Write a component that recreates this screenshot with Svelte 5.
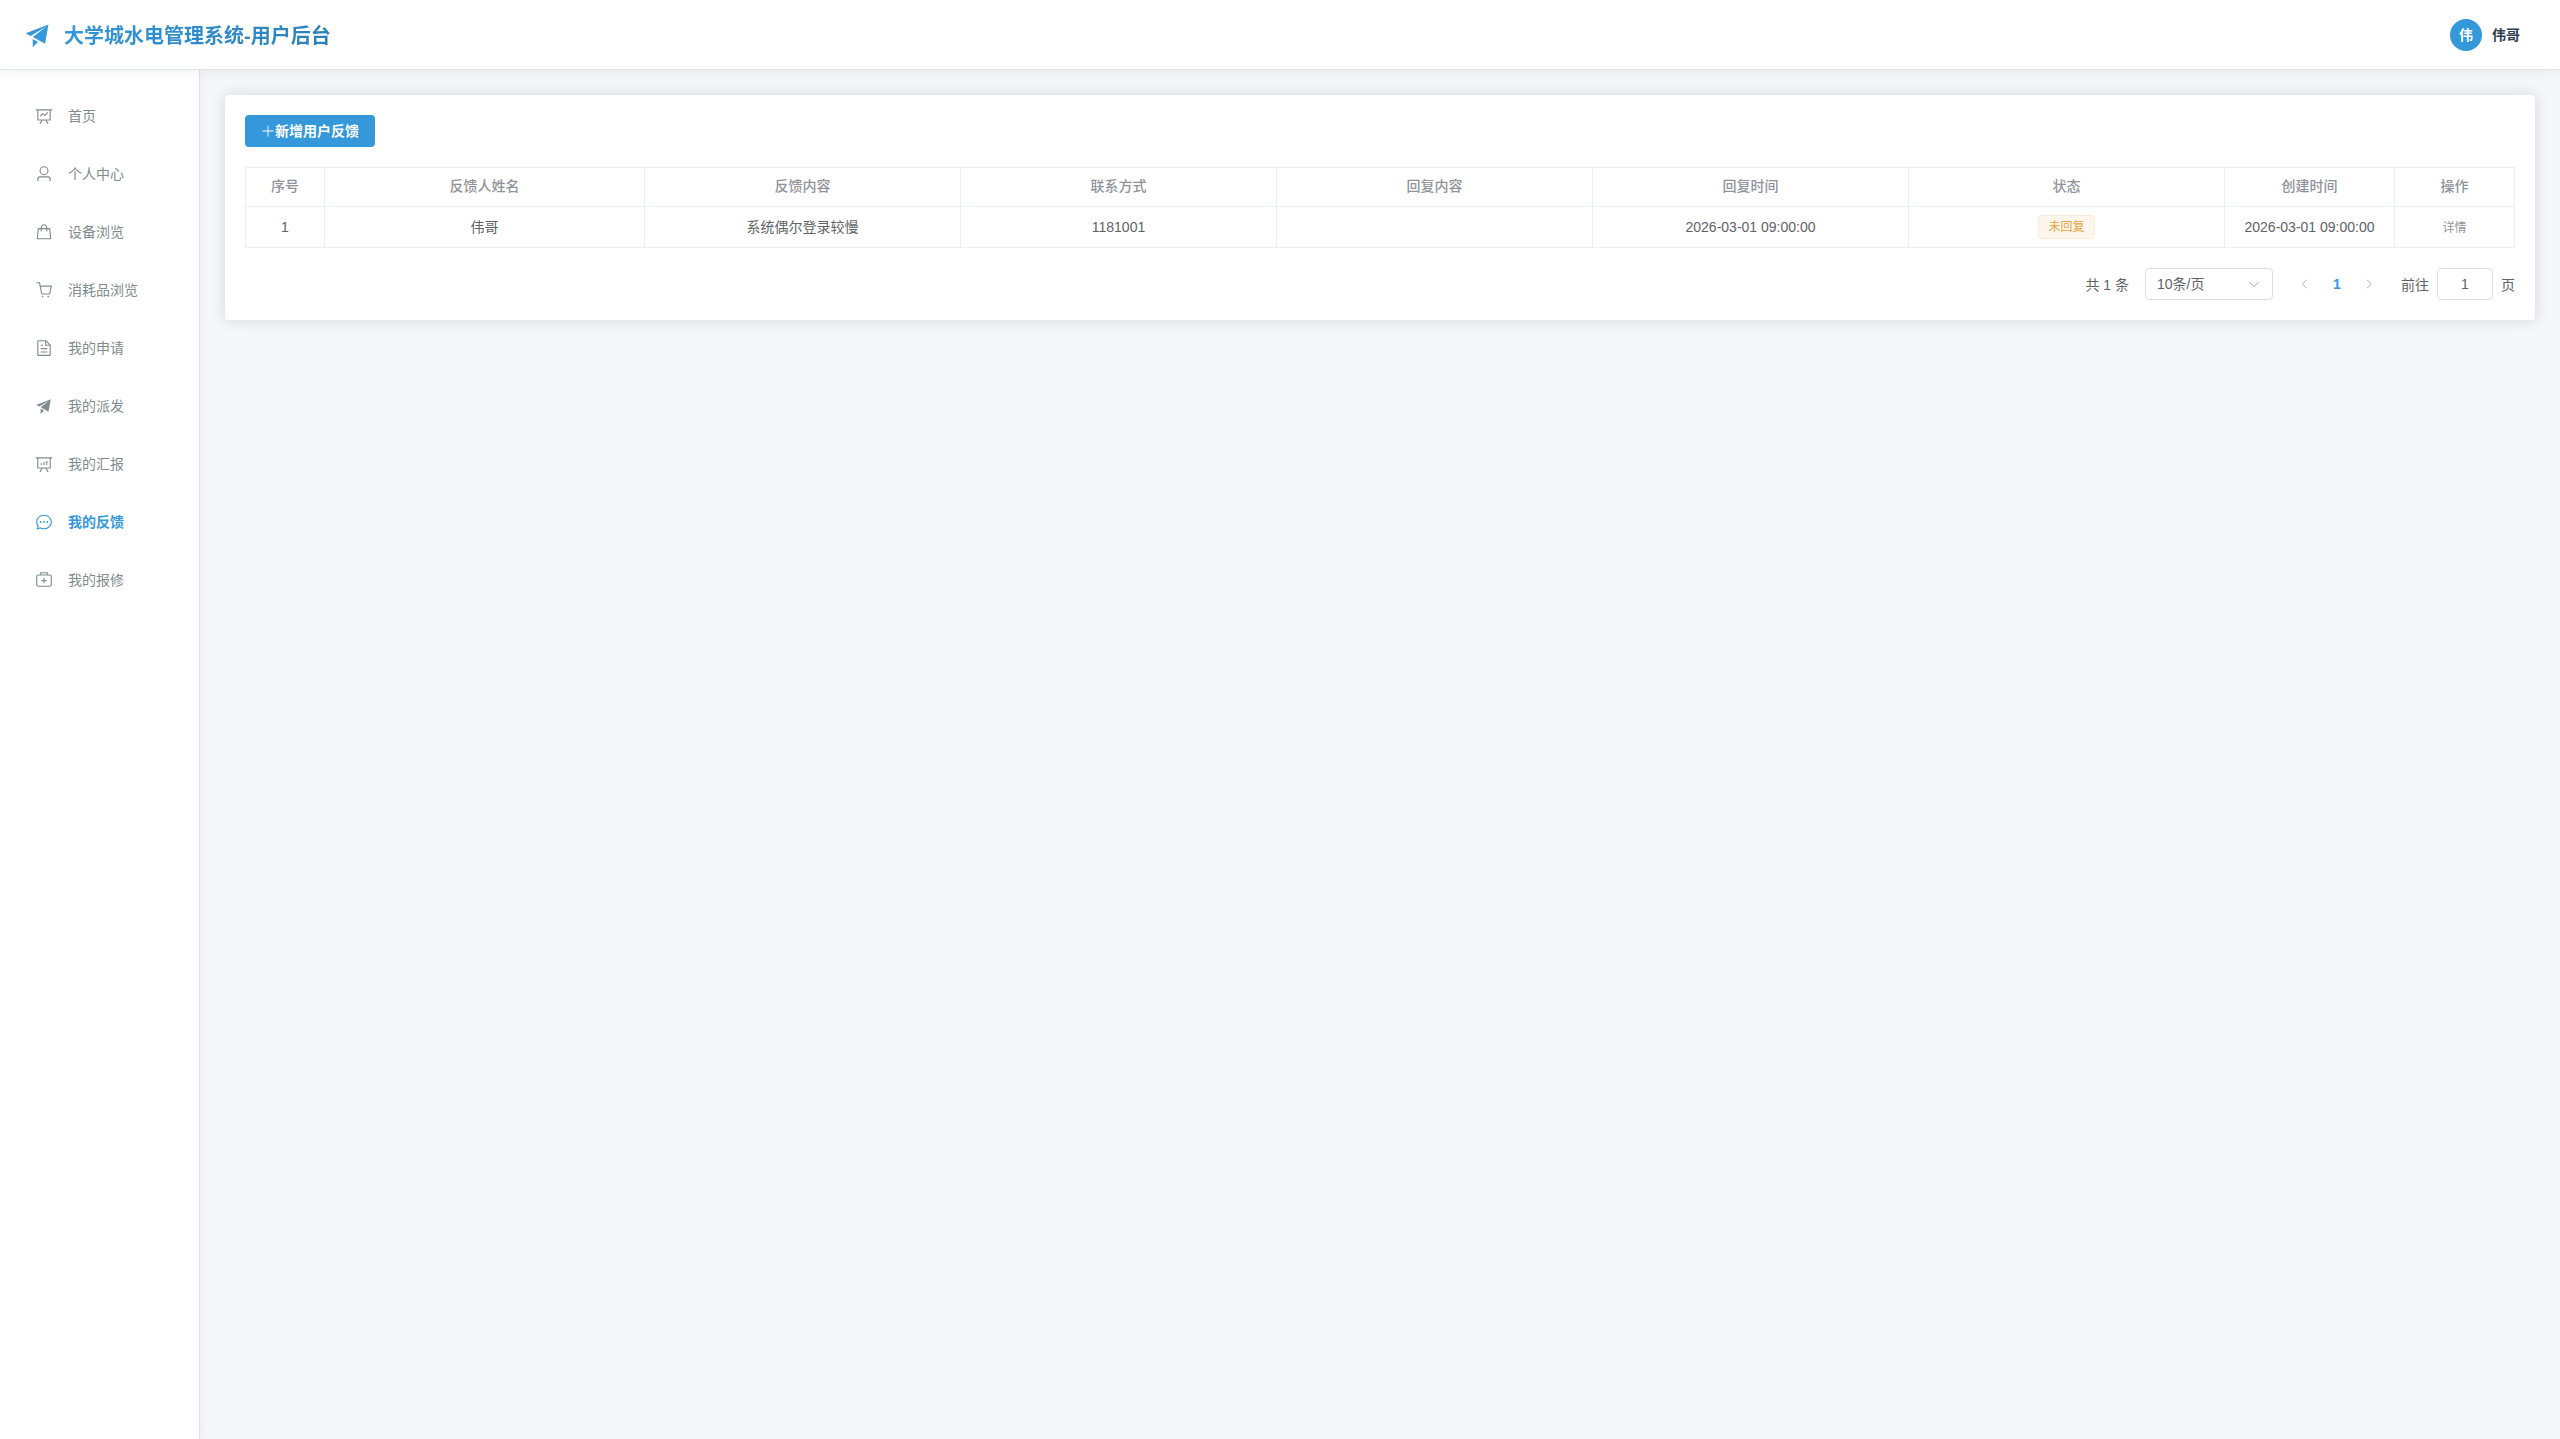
<script lang="ts">
	type MenuItem = { label: string; icon: string; href: string };

	const icons: Record<string, string> = {
		promotion:
			'm64 448 832-320-128 704-446.08-243.328L832 192 242.816 545.472zm256 512V657.024L512 768z',
		dataLine:
			'M359.168 768H160a32 32 0 0 1-32-32V192H64a32 32 0 0 1 0-64h896a32 32 0 1 1 0 64h-64v544a32 32 0 0 1-32 32H665.216l110.848 192h-73.856L591.36 768H433.024L322.176 960H248.32zM832 192H192v512h640zM342.656 534.656a32 32 0 1 1-45.312-45.312L444.992 341.76l125.44 94.08L679.04 300.032a32 32 0 1 1 49.92 39.936L581.632 524.224 451.008 426.24 342.656 534.592z',
		user: 'M512 512a192 192 0 1 0 0-384 192 192 0 0 0 0 384m0 64a256 256 0 1 1 0-512 256 256 0 0 1 0 512m320 320v-96a96 96 0 0 0-96-96H288a96 96 0 0 0-96 96v96a32 32 0 1 1-64 0v-96a160 160 0 0 1 160-160h448a160 160 0 0 1 160 160v96a32 32 0 1 1-64 0',
		goods:
			'M320 288v-22.336C320 154.688 405.504 64 512 64s192 90.688 192 201.664v22.4h131.072a32 32 0 0 1 31.808 28.8l57.6 576a32 32 0 0 1-31.808 35.2H131.328a32 32 0 0 1-31.808-35.2l57.6-576a32 32 0 0 1 31.808-28.8H320zm64 0h256v-22.336C640 189.248 582.272 128 512 128s-128 61.248-128 137.664zm-64 64H217.92l-51.2 512h690.56l-51.264-512H704v96a32 32 0 1 1-64 0v-96H384v96a32 32 0 0 1-64 0z',
		cart: 'M432 928a48 48 0 1 1 0-96 48 48 0 0 1 0 96m320 0a48 48 0 1 1 0-96 48 48 0 0 1 0 96M96 128a32 32 0 0 1 0-64h160a32 32 0 0 1 31.36 25.728L320.64 256H928a32 32 0 0 1 31.296 38.72l-96 448A32 32 0 0 1 832 768H384a32 32 0 0 1-31.36-25.728L229.76 128zm314.24 576h395.904l82.304-384H333.44z',
		document:
			'M832 384H576V128H192v768h640zm-26.496-64L640 154.496V320zM160 64h480l256 256v608a32 32 0 0 1-32 32H160a32 32 0 0 1-32-32V96a32 32 0 0 1 32-32m160 448h384v64H320zm0-192h160v64H320zm0 384h384v64H320z',
		dataAnalysis:
			'm665.216 768 110.848 192h-73.856L591.36 768H433.024L322.176 960H248.32l110.848-192H160a32 32 0 0 1-32-32V192H64a32 32 0 0 1 0-64h896a32 32 0 1 1 0 64h-64v544a32 32 0 0 1-32 32zM832 192H192v512h640zM352 448a32 32 0 0 1 32 32v64a32 32 0 0 1-64 0v-64a32 32 0 0 1 32-32m160-64a32 32 0 0 1 32 32v128a32 32 0 0 1-64 0V416a32 32 0 0 1 32-32m160-64a32 32 0 0 1 32 32v192a32 32 0 1 1-64 0V352a32 32 0 0 1 32-32',
		chat: 'm174.72 855.68 135.296-45.12 23.68 11.84C388.096 849.536 448.576 864 512 864c211.84 0 384-166.784 384-352S723.84 160 512 160 128 326.784 128 512c0 69.12 24.96 139.264 70.848 199.232l22.08 28.8-46.272 115.584zm-45.248 82.56A32 32 0 0 1 89.6 896l58.368-145.92C94.72 680.32 64 596.864 64 512 64 299.904 256 96 512 96s448 203.904 448 416-192 416-448 416a461.06 461.06 0 0 1-206.912-48.384l-175.616 58.56zM512 563.2a51.2 51.2 0 1 1 0-102.4 51.2 51.2 0 0 1 0 102.4m192 0a51.2 51.2 0 1 1 0-102.4 51.2 51.2 0 0 1 0 102.4m-384 0a51.2 51.2 0 1 1 0-102.4 51.2 51.2 0 0 1 0 102.4',
		aidKit:
			'M192 256a64 64 0 0 0-64 64v448a64 64 0 0 0 64 64h640a64 64 0 0 0 64-64V320a64 64 0 0 0-64-64zm0-64h640a128 128 0 0 1 128 128v448a128 128 0 0 1-128 128H192A128 128 0 0 1 64 768V320a128 128 0 0 1 128-128M544 512h96a32 32 0 0 1 0 64h-96v96a32 32 0 0 1-64 0v-96h-96a32 32 0 0 1 0-64h96v-96a32 32 0 0 1 64 0zM352 128v64h320v-64zm-32-64h384a32 32 0 0 1 32 32v128a32 32 0 0 1-32 32H320a32 32 0 0 1-32-32V96a32 32 0 0 1 32-32',
		plus: 'M480 480V128a32 32 0 0 1 64 0v352h352a32 32 0 1 1 0 64H544v352a32 32 0 1 1-64 0V544H128a32 32 0 0 1 0-64z',
		left: 'M609.408 149.376 277.76 489.6a32 32 0 0 0 0 44.672l331.648 340.352a29.12 29.12 0 0 0 41.728 0 30.59 30.59 0 0 0 0-42.752L339.264 511.936l311.872-319.872a30.59 30.59 0 0 0 0-42.688 29.12 29.12 0 0 0-41.728 0',
		right:
			'M340.864 149.312a30.59 30.59 0 0 0 0 42.752L652.736 512 340.864 831.872a30.59 30.59 0 0 0 0 42.752 29.12 29.12 0 0 0 41.728 0L714.24 534.336a32 32 0 0 0 0-44.672L382.592 149.376a29.12 29.12 0 0 0-41.728 0z',
		down: 'M831.872 340.864 512 652.672 192.128 340.864a30.59 30.59 0 0 0-42.752 0 29.12 29.12 0 0 0 0 41.6L489.664 714.24a32 32 0 0 0 44.672 0l340.288-331.712a29.12 29.12 0 0 0 0-41.728 30.59 30.59 0 0 0-42.752 0z'
	};

	const menu: MenuItem[] = [
		{ label: '首页', icon: 'dataLine', href: '#/home' },
		{ label: '个人中心', icon: 'user', href: '#/profile' },
		{ label: '设备浏览', icon: 'goods', href: '#/device' },
		{ label: '消耗品浏览', icon: 'cart', href: '#/consumable' },
		{ label: '我的申请', icon: 'document', href: '#/apply' },
		{ label: '我的派发', icon: 'promotion', href: '#/dispatch' },
		{ label: '我的汇报', icon: 'dataAnalysis', href: '#/report' },
		{ label: '我的反馈', icon: 'chat', href: '#/feedback' },
		{ label: '我的报修', icon: 'aidKit', href: '#/repair' }
	];

	const rows = [
		{
			name: '伟哥',
			content: '系统偶尔登录较慢',
			contact: '1181001',
			reply: '',
			replyTime: '2026-03-01 09:00:00',
			status: '未回复',
			createTime: '2026-03-01 09:00:00'
		}
	];

	let current = $state('#/feedback');
	let pageSize = $state('10');
	let page = $state('1');
</script>

{#snippet icon(name: string)}
	<svg class="icon" viewBox="0 0 1024 1024" aria-hidden="true">
		<path fill="currentColor" d={icons[name]} />
	</svg>
{/snippet}

<div class="layout">
	<header class="header">
		<div class="brand">
			{@render icon('promotion')}
			<h1>大学城水电管理系统-用户后台</h1>
		</div>
		<button class="account" type="button">
			<span class="avatar">伟</span>
			<span>伟哥</span>
		</button>
	</header>

	<div class="body">
		<nav class="sidebar">
			{#each menu as item}
				<a
					class="menu-item"
					class:active={current === item.href}
					href={item.href}
					onclick={() => (current = item.href)}
				>
					{@render icon(item.icon)}
					<span>{item.label}</span>
				</a>
			{/each}
		</nav>

		<main class="main">
			<section class="card">
				<button class="btn-add" type="button">
					{@render icon('plus')}<span>新增用户反馈</span>
				</button>

				<table>
					<colgroup>
						<col class="col-index" />
						<col class="col-name" />
						<col span="5" />
						<col class="col-time" />
						<col class="col-action" />
					</colgroup>
					<thead>
						<tr>
							<th>序号</th>
							<th>反馈人姓名</th>
							<th>反馈内容</th>
							<th>联系方式</th>
							<th>回复内容</th>
							<th>回复时间</th>
							<th>状态</th>
							<th>创建时间</th>
							<th>操作</th>
						</tr>
					</thead>
					<tbody>
						{#each rows as row, i}
							<tr>
								<td>{i + 1}</td>
								<td>{row.name}</td>
								<td>{row.content}</td>
								<td>{row.contact}</td>
								<td>{row.reply}</td>
								<td>{row.replyTime}</td>
								<td><span class="tag">{row.status}</span></td>
								<td>{row.createTime}</td>
								<td><button class="btn-text" type="button">详情</button></td>
							</tr>
						{/each}
					</tbody>
				</table>

				<div class="pagination">
					<span>共 {rows.length} 条</span>
					<div class="select">
						<select bind:value={pageSize} aria-label="每页条数">
							<option value="10">10条/页</option>
							<option value="20">20条/页</option>
							<option value="50">50条/页</option>
						</select>
						{@render icon('down')}
					</div>
					<div class="pager">
						<button type="button" disabled aria-label="上一页">{@render icon('left')}</button>
						<button type="button" class="active">1</button>
						<button type="button" disabled aria-label="下一页">{@render icon('right')}</button>
					</div>
					<label class="jump">
						<span>前往</span>
						<input type="text" bind:value={page} />
						<span>页</span>
					</label>
				</div>
			</section>
		</main>
	</div>
</div>

<style>
	:global(body) {
		margin: 0;
		background: #f5f7fa;
	}

	.layout {
		display: flex;
		flex-direction: column;
		min-height: 100vh;
		font-family: 'Liberation Sans', 'Noto Sans CJK SC', sans-serif;
		font-size: 14px;
		color: #606266;
	}

	button,
	input,
	select {
		font: inherit;
		color: inherit;
		box-sizing: border-box;
	}

	button {
		padding: 0;
		border: none;
		background: none;
		cursor: pointer;
	}

	.icon {
		display: block;
		flex: none;
		width: 14px;
		height: 14px;
	}

	.header {
		position: relative;
		z-index: 2;
		display: flex;
		align-items: center;
		justify-content: space-between;
		box-sizing: border-box;
		height: 70px;
		padding: 0 40px 0 24px;
		background: #fff;
		border-bottom: 1px solid #dfe4e6;
		box-shadow: 0 2px 12px rgba(0, 0, 0, 0.06);
	}

	.brand {
		display: flex;
		align-items: center;
		gap: 12px;
		color: #3498db;
	}

	.brand .icon {
		width: 28px;
		height: 28px;
	}

	h1 {
		margin: 0;
		font-size: 20px;
		background: linear-gradient(135deg, #3498db, #2980b9);
		background-clip: text;
		color: transparent;
	}

	.account {
		display: flex;
		align-items: center;
		gap: 10px;
		font-weight: bold;
		line-height: 22px;
		color: #2c3e50;
	}

	.avatar {
		width: 32px;
		height: 32px;
		border-radius: 50%;
		line-height: 32px;
		text-align: center;
		color: #fff;
		background: #3498db;
	}

	.body {
		flex: 1;
		display: flex;
	}

	.sidebar {
		position: relative;
		z-index: 1;
		flex: none;
		box-sizing: border-box;
		width: 200px;
		padding-top: 17px;
		background: #fff;
		border-right: 1px solid #dfe4e6;
		box-shadow: 2px 0 8px rgba(0, 0, 0, 0.04);
	}

	.menu-item {
		display: flex;
		align-items: center;
		gap: 15px;
		height: 58px;
		padding-left: 35px;
		line-height: 22px;
		color: #7f8c8d;
		text-decoration: none;
	}

	.menu-item .icon {
		width: 18px;
		height: 18px;
	}

	.menu-item.active {
		color: #3498db;
		font-weight: bold;
	}

	.main {
		flex: 1;
		min-width: 0;
		padding: 25px;
	}

	.card {
		padding: 20px;
		background: #fff;
		border-radius: 4px;
		box-shadow: 0 0 16px rgba(0, 0, 0, 0.14);
	}

	.btn-add {
		display: flex;
		align-items: center;
		height: 32px;
		margin-bottom: 20px;
		padding: 0 16px;
		border-radius: 4px;
		font-weight: bold;
		line-height: 22px;
		color: #fff;
		background: #3498db;
	}

	table {
		width: 100%;
		table-layout: fixed;
		border-collapse: separate;
		border-spacing: 0;
		border-top: 1px solid #ebeef5;
		border-left: 1px solid #ebeef5;
	}

	.col-index {
		width: 79px;
	}

	.col-name {
		width: 320px;
	}

	.col-time {
		width: 170px;
	}

	.col-action {
		width: 120px;
	}

	th,
	td {
		box-sizing: border-box;
		padding: 0;
		height: 41px;
		line-height: 22px;
		text-align: center;
		border-right: 1px solid #ebeef5;
		border-bottom: 1px solid #ebeef5;
	}

	th {
		height: 39px;
		padding-bottom: 2px;
		font-weight: 500;
		color: #909399;
	}

	.tag {
		display: inline-block;
		padding: 0 9px;
		border: 1px solid #faecd8;
		border-radius: 4px;
		font-size: 12px;
		line-height: 22px;
		vertical-align: middle;
		color: #e6a23c;
		background: #fdf6ec;
	}

	.btn-text {
		font-size: 12px;
		vertical-align: middle;
		color: #909399;
	}

	.pagination {
		display: flex;
		align-items: center;
		justify-content: flex-end;
		gap: 16px;
		margin-top: 20px;
	}

	.select {
		position: relative;
		width: 128px;
	}

	select,
	input {
		display: block;
		height: 32px;
		border: 1px solid #dcdfe6;
		border-radius: 4px;
		background: #fff;
		outline: none;
	}

	select {
		width: 100%;
		padding: 0 30px 0 11px;
		appearance: none;
	}

	.select .icon {
		position: absolute;
		top: 9px;
		right: 12px;
		color: #a8abb2;
		pointer-events: none;
	}

	.pager {
		display: flex;
	}

	.pager button {
		display: flex;
		align-items: center;
		justify-content: center;
		width: 32px;
		height: 32px;
	}

	.pager button:disabled {
		color: #a8abb2;
		cursor: not-allowed;
	}

	.pager .icon {
		width: 12px;
		height: 12px;
	}

	.pager .active {
		font-weight: bold;
		color: #3498db;
	}

	.jump {
		display: flex;
		align-items: center;
		gap: 8px;
	}

	input {
		width: 56px;
		padding: 0 11px;
		text-align: center;
	}
</style>
